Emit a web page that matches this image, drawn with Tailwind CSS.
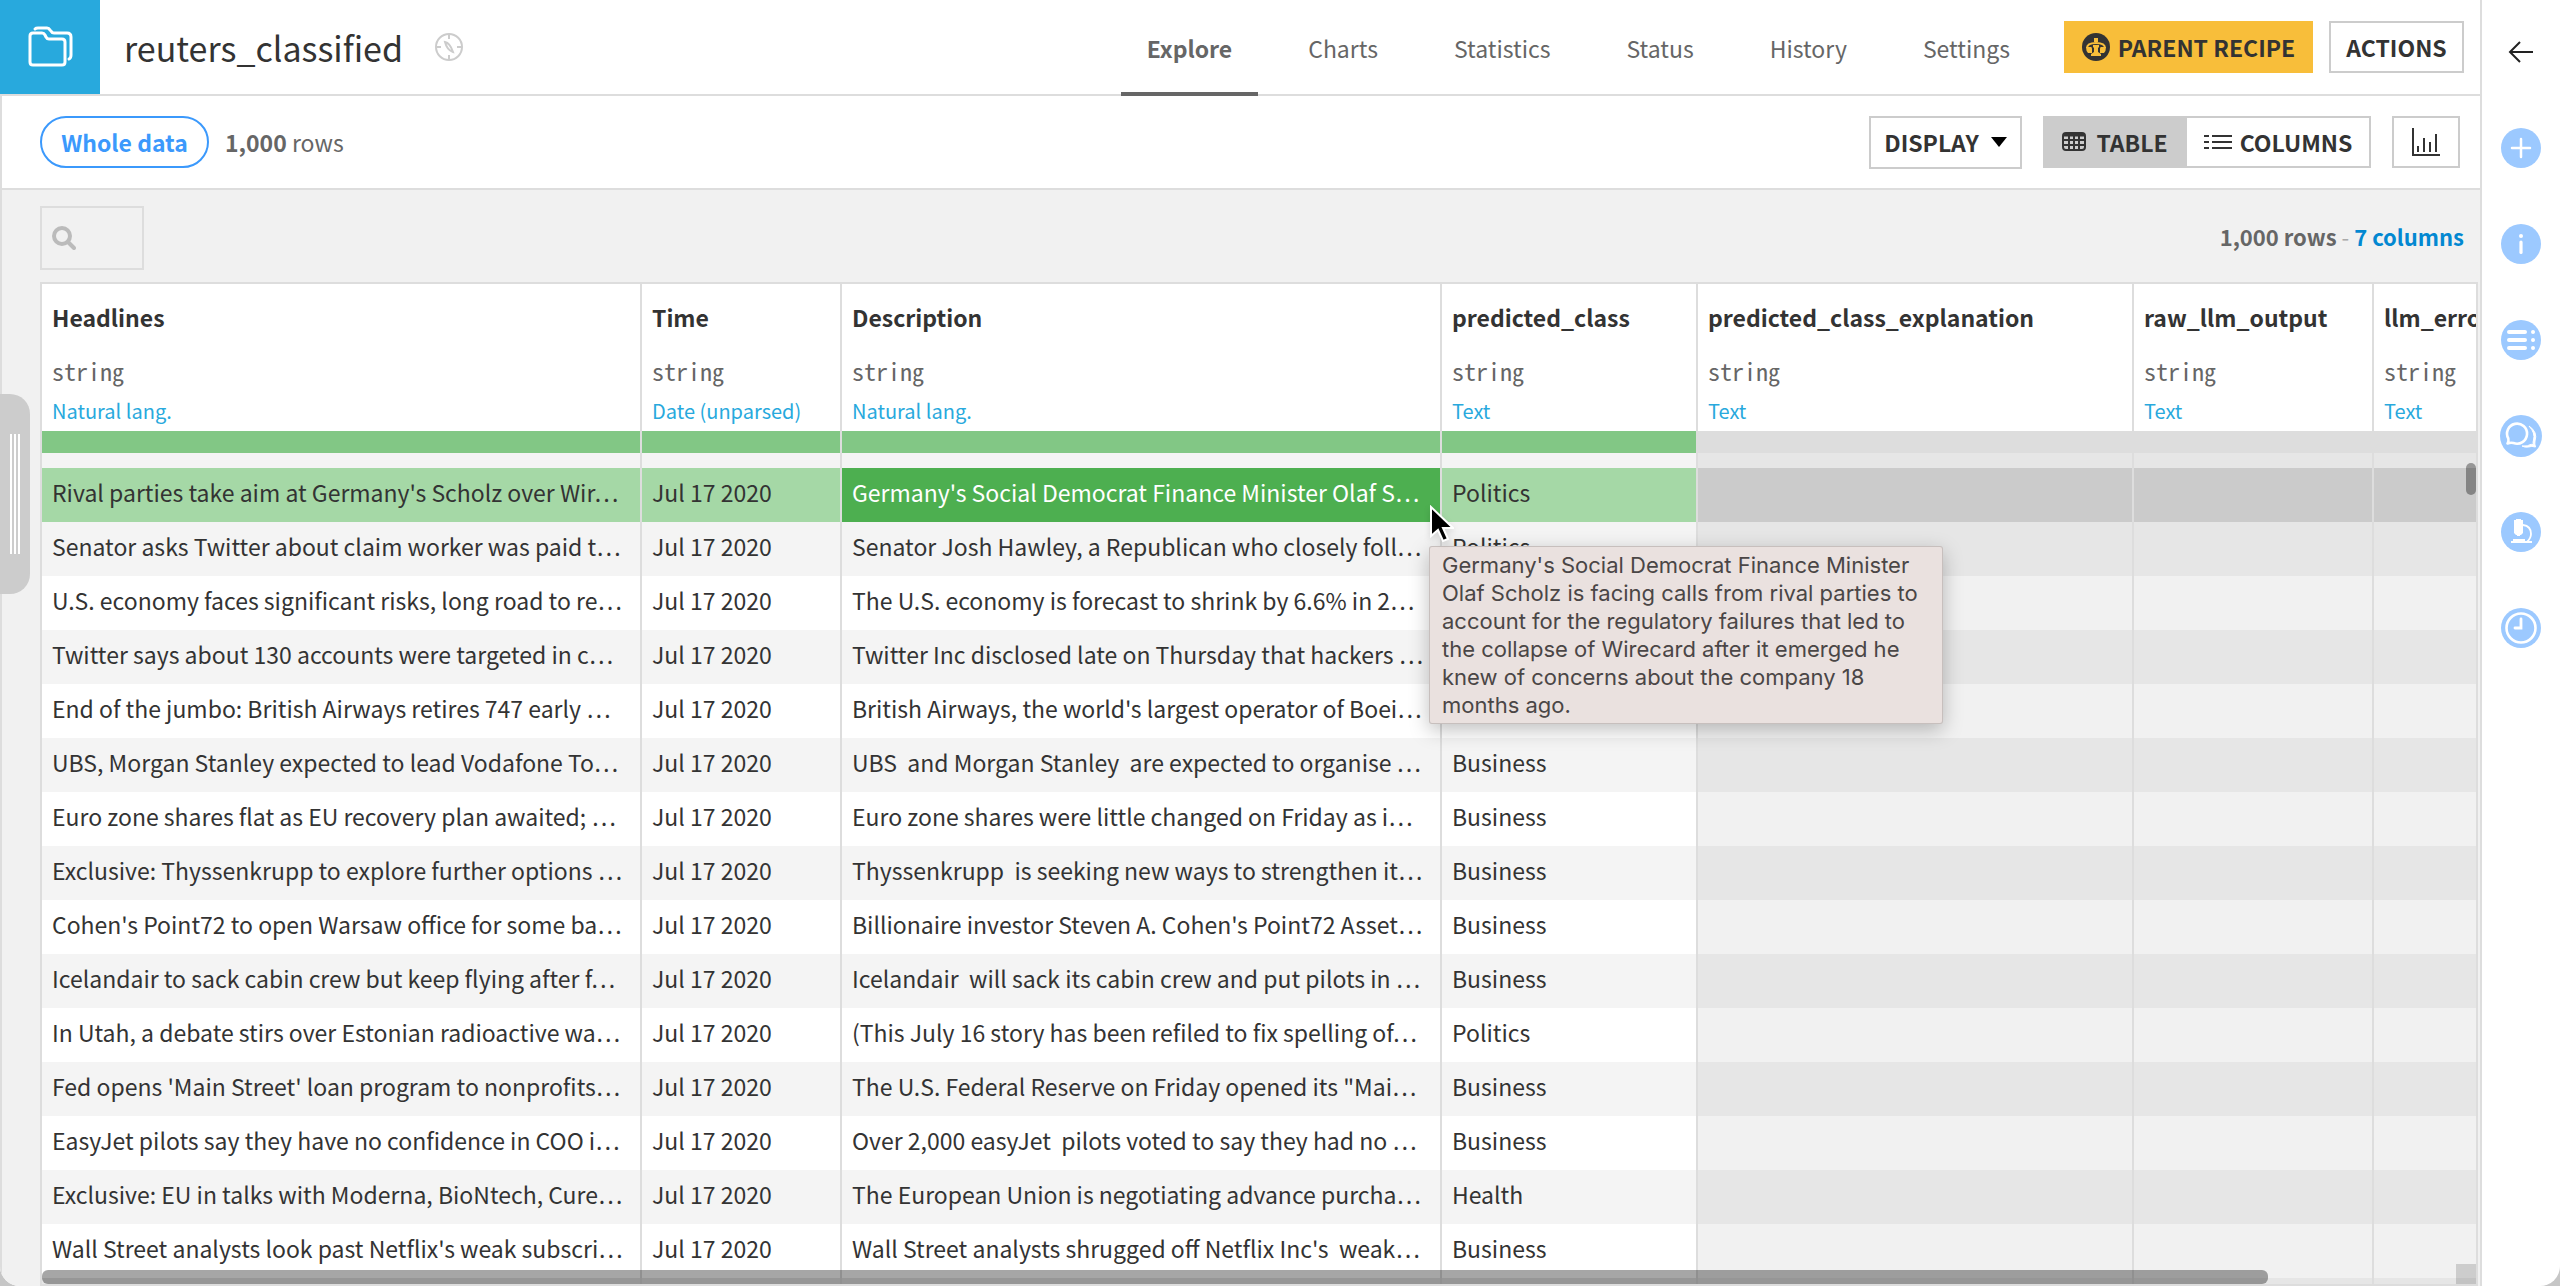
<!DOCTYPE html>
<html lang="en">
<head>
<meta charset="utf-8">
<title>reuters_classified</title>
<script src="https://cdn.jsdelivr.net/npm/@tailwindcss/browser@4"></script>
</head>
<body class="bg-[#c6c6c6] font-['Noto_Sans_CJK_KR',sans-serif] text-[23px] text-[#333]">
<div class="relative flex h-screen overflow-hidden rounded-b-[20px] bg-white">
  <main class="flex min-w-0 flex-1 flex-col">
    <header class="flex h-24 shrink-0 items-stretch border-b-2 border-[#ddd]">
      <a href="#" aria-label="Dataset" class="flex w-[100px] shrink-0 items-center justify-center bg-[#28a9dd]">
        <svg class="size-12" viewBox="0 0 48 48" fill="none" stroke="#fff" stroke-width="3" stroke-linejoin="round" stroke-linecap="round"><path d="M4 13q0-3 3-3h9q2 0 3 2l1 2q1 2 3 2h13q3 0 3 3v20q0 3-3 3H7q-3 0-3-3z"/><path d="M9 6q1-1 3-1h9q2 0 3 2l1 1q1 2 3 2h13q4 0 4 4v18q0 3-2 4"/></svg>
      </a>
      <h1 class="ml-6 flex items-center text-[34px]">reuters_classified</h1>
      <div class="ml-8 flex items-center">
        <svg class="size-7" viewBox="0 0 28 28" fill="none" stroke="#ccc" stroke-width="2"><circle cx="14" cy="14" r="13"/><path d="M14 1v5M14 22v5M1 14h5M22 14h5"/><path d="M10 9q5 1 8 10q-6-2-8-10z"/></svg>
      </div>
      <nav class="-mb-0.5 ml-auto flex items-stretch gap-6 text-[#666]">
        <a href="#" class="flex items-center border-b-4 border-[#666] px-[26px] pt-1 font-bold">Explore</a>
        <a href="#" class="flex items-center px-[26px]">Charts</a>
        <a href="#" class="flex items-center px-[26px]">Statistics</a>
        <a href="#" class="flex items-center px-[26px]">Status</a>
        <a href="#" class="flex items-center px-[26px]">History</a>
        <a href="#" class="flex items-center px-[26px]">Settings</a>
      </nav>
      <div class="ml-7 mr-4 flex items-center gap-4">
        <button class="flex h-[52px] w-[249px] items-center justify-center gap-2 bg-[#f8be3a] font-bold">
          <svg class="size-7" viewBox="0 0 28 28"><circle cx="14" cy="14" r="14" fill="#333"/><g fill="none" stroke="#f8be3a" stroke-width="2"><path d="M14 6v3M5 15q0-5 9-5t9 5"/></g><path fill="#f8be3a" d="M12 5h4v4h-4zM4 14h5q1 0 1 2v4H6q-2-2-2-6zM24 14h-5q-1 0-1 2v4h4q2-2 2-6zM11 12h6v2l-1 1v4l3 2v2H9v-2l3-2v-4l-1-1z"/></svg>
          PARENT RECIPE
        </button>
        <button class="h-[52px] w-[135px] border-2 border-[#ccc] font-bold">ACTIONS</button>
      </div>
    </header>

    <section class="flex h-[94px] shrink-0 items-center border-b-2 border-l-2 border-[#ddd] pl-[38px] pr-5">
      <button class="h-[52px] w-[169px] rounded-full border-2 border-[#3b99fc] font-bold text-[#3b99fc]">Whole data</button>
      <p class="ml-4 text-[#666]"><span class="font-bold">1,000</span> rows</p>
      <button class="ml-auto flex h-[53px] w-[153px] items-center justify-center gap-3 border-2 border-[#ccc] font-bold">DISPLAY
        <svg class="h-2.5 w-4" viewBox="0 0 16 10"><path d="M0 0h16L8 10z"/></svg>
      </button>
      <div class="ml-[21px] flex">
        <button class="flex h-[52px] w-36 items-center justify-center gap-2.5 bg-[#ccc] font-bold">
          <svg class="h-5 w-6" viewBox="0 0 24 20" fill="none" stroke="#333" stroke-width="2"><rect x="1" y="1" width="22" height="17" rx="3"/><path d="M1 3h22" stroke-width="3"/><path d="M1 8h22M1 13h22M7 3v15M12 3v15M17 3v15"/></svg>
          TABLE
        </button>
        <button class="flex h-[52px] w-[184px] items-center justify-center gap-2 border-2 border-l-0 border-[#ccc] font-bold">
          <svg class="h-4 w-7" viewBox="0 0 28 16" fill="none" stroke="#333" stroke-width="2"><path d="M0 2h5M8 2h20M0 8h5M8 8h20M0 14h5M8 14h20"/></svg>
          COLUMNS
        </button>
      </div>
      <button aria-label="Charts" class="ml-[21px] flex h-[52px] w-[68px] items-center justify-center border-2 border-[#ccc]">
        <svg class="size-7" viewBox="0 0 28 28" fill="none" stroke="#333" stroke-width="2"><path d="M1 0v27h27"/><path d="M6 18v6M12 10v14M18 14v10M24 6v18"/></svg>
      </button>
    </section>

    <section class="flex min-h-0 flex-1 flex-col border-l-2 border-[#ddd] bg-[#f1f1f1] pl-[38px] pr-0.5">
      <div class="flex h-[92px] shrink-0 items-center justify-between pr-3.5 pt-1">
        <label class="flex h-16 w-[104px] items-center border-2 border-[#ddd] pl-2.5">
          <svg class="size-6 shrink-0" viewBox="0 0 24 24" fill="none" stroke="#bbb" stroke-width="4"><circle cx="10" cy="10" r="8"/><path d="M16 16l6 6" stroke-linecap="round"/></svg>
          <input type="text" aria-label="Search" class="ml-1 w-12 bg-transparent outline-none">
        </label>
        <p class="pb-1 text-[22px] font-bold text-[#666]">1,000 rows <span class="font-normal text-[#aaa]">-</span> <a href="#" class="text-[#0388d1]">7 columns</a></p>
      </div>

      <div class="relative min-h-0 flex-1 overflow-hidden border-2 border-[#ddd] bg-white">
        <table class="w-[2672px] table-fixed border-separate border-spacing-0 text-left [&_tbody_td]:h-[54px] [&_tbody_td]:overflow-hidden [&_tbody_td]:whitespace-pre [&_tbody_td]:border-r-2 [&_tbody_td]:border-[#ddd] [&_tbody_td]:pb-1.5 [&_tbody_td]:pl-2.5 [&_tbody_td]:leading-8 [&_tbody_td:empty]:bg-black/[0.055] [&_tbody_tr:nth-child(even)]:bg-[#f4f4f4] [&_th]:border-r-2 [&_th]:border-[#ddd] [&_th]:bg-white [&_th]:pl-2.5 [&_th]:pt-[13px] [&_th]:align-top [&_th]:font-normal">
          <colgroup><col class="w-[600px]"><col class="w-[200px]"><col class="w-[600px]"><col class="w-[256px]"><col class="w-[436px]"><col class="w-[240px]"><col class="w-[340px]"></colgroup>
          <thead>
            <tr class="h-[147px]">
              <th><div class="leading-10 font-bold">Headlines</div><div class="mt-3.5 font-['Noto_Sans_Mono_CJK_KR','Liberation_Mono',monospace] text-[24px] leading-10 text-[#666]">string</div><div class="text-[20px] leading-10 text-[#28a9dd]">Natural lang.</div></th>
              <th><div class="leading-10 font-bold">Time</div><div class="mt-3.5 font-['Noto_Sans_Mono_CJK_KR','Liberation_Mono',monospace] text-[24px] leading-10 text-[#666]">string</div><div class="text-[20px] leading-10 text-[#28a9dd]">Date (unparsed)</div></th>
              <th><div class="leading-10 font-bold">Description</div><div class="mt-3.5 font-['Noto_Sans_Mono_CJK_KR','Liberation_Mono',monospace] text-[24px] leading-10 text-[#666]">string</div><div class="text-[20px] leading-10 text-[#28a9dd]">Natural lang.</div></th>
              <th><div class="leading-10 font-bold">predicted_class</div><div class="mt-3.5 font-['Noto_Sans_Mono_CJK_KR','Liberation_Mono',monospace] text-[24px] leading-10 text-[#666]">string</div><div class="text-[20px] leading-10 text-[#28a9dd]">Text</div></th>
              <th><div class="leading-10 font-bold">predicted_class_explanation</div><div class="mt-3.5 font-['Noto_Sans_Mono_CJK_KR','Liberation_Mono',monospace] text-[24px] leading-10 text-[#666]">string</div><div class="text-[20px] leading-10 text-[#28a9dd]">Text</div></th>
              <th><div class="leading-10 font-bold">raw_llm_output</div><div class="mt-3.5 font-['Noto_Sans_Mono_CJK_KR','Liberation_Mono',monospace] text-[24px] leading-10 text-[#666]">string</div><div class="text-[20px] leading-10 text-[#28a9dd]">Text</div></th>
              <th><div class="leading-10 font-bold">llm_error</div><div class="mt-3.5 font-['Noto_Sans_Mono_CJK_KR','Liberation_Mono',monospace] text-[24px] leading-10 text-[#666]">string</div><div class="text-[20px] leading-10 text-[#28a9dd]">Text</div></th>
            </tr>
            <tr class="[&>td]:h-[22px] [&>td]:border-r-2 [&>td]:border-[#ddd] [&>td]:bg-[#82c785] [&>td:nth-child(n+5)]:bg-[#ddd]"><td></td><td></td><td></td><td></td><td></td><td></td><td></td></tr>
            <tr class="[&>td]:h-[15px] [&>td]:border-r-2 [&>td]:border-[#ddd] [&>td]:bg-[#f4f4f4] [&>td:nth-child(n+5)]:bg-[#e6e6e6]"><td></td><td></td><td></td><td></td><td></td><td></td><td></td></tr>
          </thead>
          <tbody>
            <tr class="bg-[#a5d8a6] [&>td:empty]:bg-[#cbcbcb]!"><td>Rival parties take aim at Germany's Scholz over Wir…</td><td>Jul 17 2020</td><td class="bg-[#4daf50] text-white">Germany's Social Democrat Finance Minister Olaf S…</td><td>Politics</td><td></td><td></td><td></td></tr>
            <tr><td>Senator asks Twitter about claim worker was paid t…</td><td>Jul 17 2020</td><td>Senator Josh Hawley, a Republican who closely foll…</td><td>Politics</td><td></td><td></td><td></td></tr>
            <tr><td>U.S. economy faces significant risks, long road to re…</td><td>Jul 17 2020</td><td>The U.S. economy is forecast to shrink by 6.6% in 2…</td><td>Business</td><td></td><td></td><td></td></tr>
            <tr><td>Twitter says about 130 accounts were targeted in c…</td><td>Jul 17 2020</td><td>Twitter Inc disclosed late on Thursday that hackers …</td><td>Business</td><td></td><td></td><td></td></tr>
            <tr><td>End of the jumbo: British Airways retires 747 early …</td><td>Jul 17 2020</td><td>British Airways, the world's largest operator of Boei…</td><td>Business</td><td></td><td></td><td></td></tr>
            <tr><td>UBS, Morgan Stanley expected to lead Vodafone To…</td><td>Jul 17 2020</td><td>UBS  and Morgan Stanley  are expected to organise …</td><td>Business</td><td></td><td></td><td></td></tr>
            <tr><td>Euro zone shares flat as EU recovery plan awaited; …</td><td>Jul 17 2020</td><td>Euro zone shares were little changed on Friday as i…</td><td>Business</td><td></td><td></td><td></td></tr>
            <tr><td>Exclusive: Thyssenkrupp to explore further options …</td><td>Jul 17 2020</td><td>Thyssenkrupp  is seeking new ways to strengthen it…</td><td>Business</td><td></td><td></td><td></td></tr>
            <tr><td>Cohen's Point72 to open Warsaw office for some ba…</td><td>Jul 17 2020</td><td>Billionaire investor Steven A. Cohen's Point72 Asset…</td><td>Business</td><td></td><td></td><td></td></tr>
            <tr><td>Icelandair to sack cabin crew but keep flying after f…</td><td>Jul 17 2020</td><td>Icelandair  will sack its cabin crew and put pilots in …</td><td>Business</td><td></td><td></td><td></td></tr>
            <tr><td>In Utah, a debate stirs over Estonian radioactive wa…</td><td>Jul 17 2020</td><td>(This July 16 story has been refiled to fix spelling of…</td><td>Politics</td><td></td><td></td><td></td></tr>
            <tr><td>Fed opens 'Main Street' loan program to nonprofits…</td><td>Jul 17 2020</td><td>The U.S. Federal Reserve on Friday opened its "Mai…</td><td>Business</td><td></td><td></td><td></td></tr>
            <tr><td>EasyJet pilots say they have no confidence in COO i…</td><td>Jul 17 2020</td><td>Over 2,000 easyJet  pilots voted to say they had no …</td><td>Business</td><td></td><td></td><td></td></tr>
            <tr><td>Exclusive: EU in talks with Moderna, BioNtech, Cure…</td><td>Jul 17 2020</td><td>The European Union is negotiating advance purcha…</td><td>Health</td><td></td><td></td><td></td></tr>
            <tr><td>Wall Street analysts look past Netflix's weak subscri…</td><td>Jul 17 2020</td><td>Wall Street analysts shrugged off Netflix Inc's  weak…</td><td>Business</td><td></td><td></td><td></td></tr>
            <tr><td></td><td></td><td></td><td></td><td></td><td></td><td></td></tr>
          </tbody>
        </table>
        <div class="absolute right-0 top-[179px] h-8 w-2.5 rounded-full bg-black/35"></div>
        <div class="absolute bottom-0 left-0 h-3.5 w-[2226px] rounded-md bg-black/35"></div>
        <div class="absolute bottom-0 right-0 size-5 bg-black/15"></div>
      </div>
    </section>
  </main>

  <aside class="flex w-20 shrink-0 flex-col items-center gap-14 border-l-2 border-[#ddd] pt-8">
    <button aria-label="Collapse panel" class="size-10"><svg viewBox="0 0 40 40" fill="none" stroke="#222" stroke-width="2"><path d="M32 20H9M19 10L9 20l10 10"/></svg></button>
    <button aria-label="Add" class="size-10"><svg viewBox="0 0 40 40" fill="none" stroke="#fff" stroke-width="2.500" stroke-linecap="round"><circle cx="20" cy="20" r="20" fill="#9cc9ff" stroke="none"/><path d="M20 11v18M11 20h18"/></svg></button>
    <button aria-label="Details" class="size-10"><svg viewBox="0 0 40 40"><circle cx="20" cy="20" r="20" fill="#9cc9ff"/><circle cx="20" cy="12" r="2" fill="#fff"/><path d="M20 18v10.500" stroke="#fff" stroke-width="3.200" stroke-linecap="round"/></svg></button>
    <button aria-label="Schema" class="size-10"><svg viewBox="0 0 40 40" fill="none" stroke="#fff" stroke-width="4" stroke-linecap="round"><circle cx="20" cy="20" r="20" fill="#9cc9ff" stroke="none"/><path d="M8 12h16M8 20h16M8 28h16M32 12h.01M32 20h.01M32 28h.01"/></svg></button>
    <button aria-label="Discussions" class="size-10"><svg class="overflow-visible" viewBox="0 0 40 40" fill="none" stroke="#fff" stroke-width="2.600" stroke-linejoin="round"><circle cx="20" cy="20" r="21" fill="#9cc9ff" stroke="none"/><path d="M6.500 27.500q1.500-2 .8-5a10 10 0 1 1 5.200 4.500q-3-.8-6 .5z"/><path fill="#fff" stroke-width="1" d="M28 10q9 6 6 15q-.6 3 .5 6q-4-1.200-7 0q-4 .6-6.500-1q6.500.3 8-1.300q1.500-.7 3.300-.2q-.6-2.500.2-4.500q2-7-4.500-14z"/></svg></button>
    <button aria-label="Lab" class="size-10"><svg viewBox="0 0 40 40" fill="none"><circle cx="20" cy="20" r="20" fill="#9cc9ff"/><path fill="#fff" d="M15 7h5v1h2v13l-2 2h-1v1h-3v-1h-1l-2-2V8h2zM12 27h12v2h7v2H10v-2h2z"/><path d="M22 13q8 1 8 9q0 4-4 8" stroke="#fff" stroke-width="1.800"/></svg></button>
    <button aria-label="History" class="size-10"><svg viewBox="0 0 40 40" fill="none" stroke="#fff" stroke-width="2.600" stroke-linecap="round"><circle cx="20" cy="20" r="20" fill="#9cc9ff" stroke="none"/><circle cx="20" cy="20" r="14.500"/><path d="M20 11v9h-6" stroke-width="2.800"/></svg></button>
  </aside>

  <div class="absolute left-0 top-[394px] flex h-[200px] w-[30px] items-center justify-center gap-0.5 rounded-r-[20px] bg-[#ccc]">
    <div class="h-[120px] w-0.5 bg-white"></div><div class="h-[120px] w-0.5 bg-white"></div><div class="h-[120px] w-0.5 bg-white"></div>
  </div>
  <div role="tooltip" class="absolute left-[1429px] top-[546px] h-[178px] w-[514px] whitespace-nowrap rounded-[3px] border border-black/15 bg-[#eae1df] py-1 pl-3 font-['Inter',sans-serif] text-[22px] leading-7 text-[#4a4646] shadow-[0_6px_20px_rgba(0,0,0,0.25)]">Germany's Social Democrat Finance Minister<br>Olaf Scholz is facing calls from rival parties to<br>account for the regulatory failures that led to<br>the collapse of Wirecard after it emerged he<br>knew of concerns about the company 18<br>months ago.</div>
  <svg class="absolute left-[1430px] top-[505px] h-[38px] w-6 drop-shadow-md" viewBox="0 0 24 38"><path d="M1 2v29l7-6 5 11 5-2-5-11h10z" stroke="#fff" stroke-width="2"/></svg>
</div>
</body>
</html>
